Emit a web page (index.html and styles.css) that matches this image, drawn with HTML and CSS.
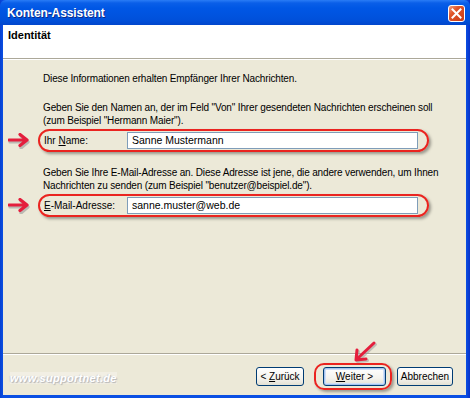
FILE: index.html
```html
<!DOCTYPE html>
<html lang="de">
<head>
<meta charset="utf-8">
<title>Konten-Assistent</title>
<link rel="stylesheet" href="styles.css">
</head>
<body>
<div class="window">
  <div class="titlebar">
    <span class="title">Konten-Assistent</span>
    <span class="close">
      <svg width="11" height="11" viewBox="0 0 11 11"><path d="M1.5 1.5 L9.5 9.5 M9.5 1.5 L1.5 9.5" stroke="#fff" stroke-width="2" stroke-linecap="square"/></svg>
    </span>
  </div>
  <div class="client">
    <div class="header">Identität</div>
    <div class="content">
      <p class="para first">Diese Informationen erhalten Empfänger Ihrer Nachrichten.</p>
      <p class="para">Geben Sie den Namen an, der im Feld "Von" Ihrer gesendeten Nachrichten erscheinen soll<br>(zum Beispiel "Hermann Maier").</p>
      <div class="row">
        <svg class="arrow" width="26" height="16" viewBox="0 0 26 16">
          <path d="M2 9 H18 M13 3 L20 9 L13 15" fill="none" stroke="#9a9a9a" stroke-width="3.2" stroke-linecap="round" stroke-linejoin="round" opacity="0.6"/>
          <path d="M1 7 H17 M12 1.5 L19 7 L12 12.5" fill="none" stroke="#e41e3c" stroke-width="3.2" stroke-linecap="round" stroke-linejoin="round"/>
        </svg>
        <div class="oval">
          <span class="label">Ihr <u>N</u>ame:</span>
          <span class="input">Sanne Mustermann</span>
        </div>
      </div>
      <p class="para second">Geben Sie Ihre E-Mail-Adresse an. Diese Adresse ist jene, die andere verwenden, um Ihnen<br>Nachrichten zu senden (zum Beispiel "benutzer@beispiel.de").</p>
      <div class="row">
        <svg class="arrow" width="26" height="16" viewBox="0 0 26 16">
          <path d="M2 9 H18 M13 3 L20 9 L13 15" fill="none" stroke="#9a9a9a" stroke-width="3.2" stroke-linecap="round" stroke-linejoin="round" opacity="0.6"/>
          <path d="M1 7 H17 M12 1.5 L19 7 L12 12.5" fill="none" stroke="#e41e3c" stroke-width="3.2" stroke-linecap="round" stroke-linejoin="round"/>
        </svg>
        <div class="oval">
          <span class="label"><u>E</u>-Mail-Adresse:</span>
          <span class="input">sanne.muster@web.de</span>
        </div>
      </div>
    </div>
    <div class="footer">
      <span class="watermark">www.supportnet.de</span>
      <div class="buttons">
        <span class="btn back"><span>&lt; <u>Z</u>urück</span></span>
        <span class="btn-oval"><span class="btn default"><span><u>W</u>eiter &gt;</span></span></span>
        <span class="btn cancel"><span>Abbrechen</span></span>
      </div>
      <svg class="pointer" width="28" height="26" viewBox="0 0 28 26">
        <path d="M24 4 L8 19 M7 11 L6 21 L16 20" fill="none" stroke="#9a9a9a" stroke-width="3" stroke-linecap="round" stroke-linejoin="round" opacity="0.55" transform="translate(1.5,1.5)"/>
        <path d="M24 4 L8 19 M7 11 L6 21 L16 20" fill="none" stroke="#e41e3c" stroke-width="3" stroke-linecap="round" stroke-linejoin="round"/>
      </svg>
    </div>
  </div>
</div>
</body>
</html>
```
FILE: styles.css
```css
* { box-sizing: border-box; }
html, body { margin: 0; padding: 0; }
body {
  width: 470px;
  height: 398px;
  overflow: hidden;
  font-family: "Liberation Sans", Arial, sans-serif;
  font-size: 10px;
  color: #000;
}
.window {
  width: 470px;
  height: 398px;
  display: flex;
  flex-direction: column;
  background: linear-gradient(to right, #0840d0 0, #0a4fe3 3px, #0a4fe3 466px, #0831c8 470px);
}
.titlebar {
  height: 25px;
  flex: none;
  display: flex;
  align-items: center;
  justify-content: space-between;
  padding: 0 5px 0 7px;
  background: linear-gradient(to bottom, #2a7cf6 0, #0a5fe8 3px, #0057e5 8px, #0054e0 14px, #0050da 20px, #0246cc 25px);
  border-radius: 6px 6px 0 0;
}
.title {
  color: #fff;
  font-weight: bold;
  font-size: 12px;
  letter-spacing: -0.1px;
  text-shadow: 1px 1px 0 #0a2a8a;
  margin-top: 1px;
}
.close {
  width: 17px;
  height: 17px;
  margin-top: 2px;
  border: 1px solid #fff;
  border-radius: 3px;
  background: linear-gradient(to bottom right, #f0a080 0%, #e0552a 35%, #c83a14 100%);
  display: flex;
  align-items: center;
  justify-content: center;
}
.client {
  flex: 1;
  margin: 0 4px 3px 3px;
  background: #ece9d8;
  display: flex;
  flex-direction: column;
}
.header {
  height: 34px;
  flex: none;
  background: #fff;
  border-bottom: 1px solid #aca899;
  padding: 4px 0 0 5px;
  font-weight: bold;
  font-size: 11px;
}
.content {
  flex: 1;
  padding: 12px 0 0 5px;
  border-top: 1px solid #fff;
}
.para {
  margin: 0 0 0 35px;
  line-height: 13px;
  letter-spacing: -0.15px;
}
.para.first { margin-bottom: 16px; }
.para.second { margin-top: 14px; }
.row {
  display: flex;
  align-items: center;
  gap: 4px;
  margin-top: 2px;
}
.arrow { flex: none; margin-top: 1px; }
.oval {
  width: 391px;
  height: 23px;
  display: flex;
  align-items: center;
  padding: 0 9px 0 4px;
  border: 2px solid #ea2420;
  border-radius: 12px;
  box-shadow: 2px 2px 3px rgba(0, 0, 0, 0.35);
}
.label {
  width: 83px;
  flex: none;
}
.input {
  flex: 1;
  height: 17px;
  line-height: 15px;
  padding-left: 4px;
  background: #fff;
  border: 1px solid #7f9db9;
  font-size: 10.5px;
}
.footer {
  height: 42px;
  flex: none;
  position: relative;
  border-top: 1px solid #aca899;
  box-shadow: inset 0 1px 0 #fff;
  display: flex;
  align-items: flex-start;
  justify-content: space-between;
  padding: 9px 13px 0 7px;
}
.watermark {
  margin-top: 9px;
  color: #fff;
  font-weight: bold;
  font-style: italic;
  font-size: 11px;
  letter-spacing: 0.3px;
  text-shadow: 1px 1px 1px #b5b5b5, -1px 0 1px #cfcfcf;
  background: rgba(255, 255, 255, 0.3);
}
.buttons {
  display: flex;
  align-items: center;
}
.btn {
  height: 19px;
  display: flex;
  align-items: center;
  justify-content: center;
  border: 1px solid #003c74;
  border-radius: 3px;
  background: linear-gradient(to bottom, #ffffff 0%, #f4f3ee 60%, #e3e1d4 100%);
}
.back { width: 48px; margin-right: 10px; }
.btn-oval {
  display: flex;
  padding: 2px 4px 2px 7px;
  border: 2px solid #ea2420;
  border-radius: 10px;
  box-shadow: 2px 2px 3px rgba(0, 0, 0, 0.35);
  margin-right: 5px;
}
.default {
  width: 63px;
  box-shadow: inset 0 0 0 1px #a6c4ee, inset 0 0 0 2px #cfdff8;
}
.cancel { width: 56px; }
.pointer {
  position: absolute;
  left: 347px;
  top: -15px;
}
```
